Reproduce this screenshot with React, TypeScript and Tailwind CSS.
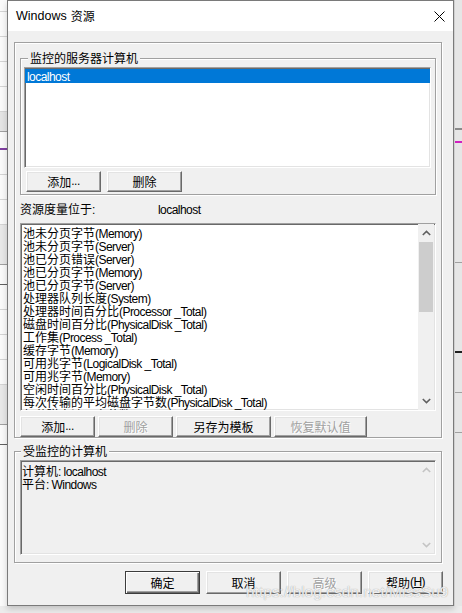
import React from "react";

const CJK = /[\u3000-\u9fff\uff00-\uffef]/;

function Txt({ s }: { s: string }) {
  const parts: { t: string; c: boolean }[] = [];
  for (const ch of s) {
    const c = CJK.test(ch);
    const last = parts[parts.length - 1];
    if (last && last.c === c) last.t += ch;
    else parts.push({ t: ch, c });
  }
  return (
    <>
      {parts.map((p, i) => (
        <span
          key={i}
          className={
            p.c
              ? "text-[12px] font-['Noto_Sans_CJK_SC',sans-serif]"
              : "text-[12px] tracking-[-0.55px] font-['Liberation_Sans',Arial,sans-serif]"
          }
        >
          {p.t}
        </span>
      ))}
    </>
  );
}

function Chevron({ down, light }: { down?: boolean; light?: boolean }) {
  return (
    <svg width="9" height="6" viewBox="0 0 9 6" className="block">
      <polyline
        points={down ? "0.8,1 4.5,4.6 8.2,1" : "0.8,5 4.5,1.4 8.2,5"}
        fill="none"
        stroke={light ? "#c4c4c4" : "#606060"}
        strokeWidth="1.6"
      />
    </svg>
  );
}

const btnBase =
  "flex items-center justify-center bg-[#f0f0f0] border border-t-white border-l-white border-r-[#696969] border-b-[#696969] shadow-[inset_-1px_-1px_0_#a0a0a0,inset_1px_1px_0_#e3e3e3] leading-[13px] whitespace-nowrap";
const btnDef =
  "flex items-center justify-center bg-[#f0f0f0] border border-[#3c3c3c] shadow-[inset_1px_1px_0_#fff,inset_-1px_-1px_0_#696969,inset_-2px_-2px_0_#a0a0a0] leading-[13px] whitespace-nowrap";
const disabledTxt = "text-[#a0a0a0] [text-shadow:1px_1px_0_#fff]";

const sunken =
  "border border-t-[#a0a0a0] border-l-[#a0a0a0] border-r-white border-b-white shadow-[inset_1px_1px_0_#696969,inset_-1px_-1px_0_#e3e3e3]";
const etched = "border border-[#a0a0a0] shadow-[inset_1px_1px_0_#fff,1px_1px_0_#fff]";

const counters = [
  "池未分页字节(Memory)",
  "池未分页字节(Server)",
  "池已分页错误(Server)",
  "池已分页字节(Memory)",
  "池已分页字节(Server)",
  "处理器队列长度(System)",
  "处理器时间百分比(Processor _Total)",
  "磁盘时间百分比(PhysicalDisk _Total)",
  "工作集(Process _Total)",
  "缓存字节(Memory)",
  "可用兆字节(LogicalDisk _Total)",
  "可用兆字节(Memory)",
  "空闲时间百分比(PhysicalDisk _Total)",
  "每次传输的平均磁盘字节数(PhysicalDisk _Total)",
  "每秒磁盘读取字节数(PhysicalDisk _Total)",
];

export default function App() {
  return (
    <div className="relative w-[462px] h-[613px] overflow-hidden bg-[#ececec] flex text-black font-['Liberation_Sans','Noto_Sans_CJK_SC',sans-serif]">
      {/* background app, left */}
      <div className="w-[7px] h-[606px] bg-[#fafafa] flex flex-col">
        <div className="h-[12px] border-b border-[#d4d4d4]" />
        <div className="h-[25px] border-b border-[#d4d4d4]" />
        <div className="h-[25px] border-b border-[#d4d4d4]" />
        <div className="h-[25px] border-b border-[#d4d4d4]" />
        <div className="h-[25px] border-b border-[#d4d4d4]" />
        <div className="h-[20px] bg-[#e4e4e4] border-b border-[#a0a0a0]" />
        <div className="h-[18px] border-b-2 border-[#8040a0]" />
        <div className="h-[25px] border-b border-[#d4d4d4]" />
        <div className="h-[25px] border-b border-[#d4d4d4]" />
        <div className="h-[25px] border-b border-[#d4d4d4]" />
        <div className="h-[40px] bg-[#e8e8e8] border-b border-[#a0a0a0]" />
        <div className="h-[20px] border-b border-[#606060]" />
        <div className="h-[25px] border-b border-[#d4d4d4]" />
        <div className="h-[25px] border-b border-[#d4d4d4]" />
        <div className="h-[25px] border-b border-[#d4d4d4]" />
        <div className="h-[25px] border-b border-[#d4d4d4]" />
        <div className="h-[40px] bg-[#e8e8e8] border-b border-[#a0a0a0]" />
        <div className="h-[20px] border-b border-[#606060]" />
      </div>

      {/* dialog */}
      <div className="w-[447px] h-[606px] border border-[#7a7a7a] bg-[#f0f0f0] flex flex-col shadow-[0_3px_6px_rgba(0,0,0,0.18)]">
        <div className="h-[30px] bg-white flex items-center justify-between pl-[8px] pr-[8px]">
          <div className="flex items-center leading-[16px]">
            <span className="text-[12.5px] font-['Liberation_Sans',sans-serif]">Windows</span>
            <span className="ml-[4px] text-[12px] font-['Noto_Sans_CJK_SC',sans-serif]">资源</span>
          </div>
          <svg width="11" height="11" viewBox="0 0 11 11" className="block mt-[1px]">
            <path d="M0.5 0.5 L10.5 10.5 M10.5 0.5 L0.5 10.5" stroke="#000" strokeWidth="1" />
          </svg>
        </div>

        <div className="flex flex-col pl-[6px]">
          {/* outer box */}
          <div className={"mt-[11px] w-[428px] h-[396px] flex flex-col pl-[5px] pt-[15px] " + etched}>
            {/* group 1 */}
            <div className={"relative w-[416px] h-[137px] flex flex-col pl-[3px] pt-[8px] " + etched}>
              <div className="absolute -top-[8px] left-[7px] px-[2px] bg-[#f0f0f0] leading-[14px] whitespace-nowrap">
                <Txt s="监控的服务器计算机" />
              </div>
              <div className={"w-[407px] h-[101px] bg-white pt-[1px] " + sunken}>
                <div className="h-[14px] bg-[#0078d7] text-white pl-[2px] leading-[14px]">
                  <Txt s="localhost" />
                </div>
              </div>
              <div className="mt-[3px] pl-[2px] flex gap-[6px]">
                <div className={"w-[75px] h-[21px] " + btnBase}>
                  <Txt s="添加..." />
                </div>
                <div className={"w-[75px] h-[21px] " + btnBase}>
                  <Txt s="删除" />
                </div>
              </div>
            </div>

            <div className="mt-[7px] h-[14px] flex items-center leading-[14px] whitespace-nowrap">
              <div className="w-[138px]">
                <Txt s="资源度量位于:" />
              </div>
              <div>
                <Txt s="localhost" />
              </div>
            </div>

            {/* counters list */}
            <div className={"mt-[7px] w-[416px] h-[188px] bg-white flex overflow-hidden " + sunken}>
              <div className="flex-1 pt-[2px] pl-[2px] overflow-hidden">
                {counters.map((c, i) => (
                  <div key={i} className="h-[13px] leading-[13px] whitespace-nowrap">
                    <Txt s={c} />
                  </div>
                ))}
              </div>
              <div className="w-[16px] mr-[1px] bg-[#f0f0f0] flex flex-col">
                <div className="h-[18px] flex items-center justify-center">
                  <Chevron />
                </div>
                <div className="h-[70px] mx-[1px] bg-[#cdcdcd]" />
                <div className="flex-1" />
                <div className="h-[18px] flex items-center justify-center">
                  <Chevron down />
                </div>
              </div>
            </div>

            <div className="mt-[5px] flex gap-[3px]">
              <div className={"w-[75px] h-[21px] " + btnBase}>
                <Txt s="添加..." />
              </div>
              <div className={"w-[75px] h-[21px] " + btnBase + " " + disabledTxt}>
                <Txt s="删除" />
              </div>
              <div className={"w-[95px] h-[21px] " + btnBase}>
                <Txt s="另存为模板" />
              </div>
              <div className={"w-[93px] h-[21px] " + btnBase + " " + disabledTxt}>
                <Txt s="恢复默认值" />
              </div>
            </div>
          </div>

          {/* group 2 */}
          <div className={"relative mt-[13px] w-[428px] h-[112px] pl-[5px] pt-[8px] " + etched}>
            <div className="absolute -top-[8px] left-[6px] px-[2px] bg-[#f0f0f0] leading-[14px] whitespace-nowrap">
              <Txt s="受监控的计算机" />
            </div>
            <div className={"w-[416px] h-[95px] bg-[#f0f0f0] flex " + sunken}>
              <div className="flex-1 pt-[3px] pl-[1px]">
                <div className="h-[13px] leading-[13px] whitespace-nowrap">
                  <Txt s="计算机: localhost" />
                </div>
                <div className="h-[13px] leading-[13px] whitespace-nowrap">
                  <Txt s="平台: Windows" />
                </div>
              </div>
              <div className="w-[16px] mr-[1px] flex flex-col justify-between">
                <div className="h-[18px] flex items-center justify-center">
                  <Chevron light />
                </div>
                <div className="h-[18px] flex items-center justify-center">
                  <Chevron down light />
                </div>
              </div>
            </div>
          </div>

          {/* footer */}
          <div className="mt-[8px] ml-[111px] flex gap-[6px]">
            <div className={"w-[75px] h-[23px] " + btnDef}>
              <Txt s="确定" />
            </div>
            <div className={"w-[75px] h-[23px] " + btnBase}>
              <Txt s="取消" />
            </div>
            <div className={"w-[75px] h-[23px] " + btnBase + " " + disabledTxt}>
              <Txt s="高级" />
            </div>
            <div className={"w-[75px] h-[23px] " + btnBase}>
              <Txt s="帮助(" />
              <span className="underline text-[12px] tracking-[-0.55px] font-['Liberation_Sans',sans-serif]">H</span>
              <Txt s=")" />
            </div>
          </div>
        </div>
      </div>

      {/* background app, right */}
      <div className="flex-1 h-[606px] bg-[#e6e6e6] flex flex-col border-l border-[#cfcfcf]">
        <div className="h-[130px] border-b-2 border-[#8a8a8a]" />
        <div className="h-[13px] border-b-2 border-[#d020c0]" />
        <div className="h-[120px] border-b border-[#a0a0a0]" />
        <div className="h-[90px] border-b-2 border-[#202020]" />
        <div className="h-[40px] border-b border-[#a0a0a0]" />
        <div className="h-[40px] border-b border-[#a0a0a0]" />
      </div>

      {/* watermark */}
      <div className="absolute left-[246px] top-[583px] text-[15.5px] leading-[18px] text-white/85 font-['Liberation_Sans',sans-serif] [text-shadow:0_0_1px_#8a8a8a] whitespace-nowrap">
        https://blog.csdn.net/MissSu9
      </div>
    </div>
  );
}
